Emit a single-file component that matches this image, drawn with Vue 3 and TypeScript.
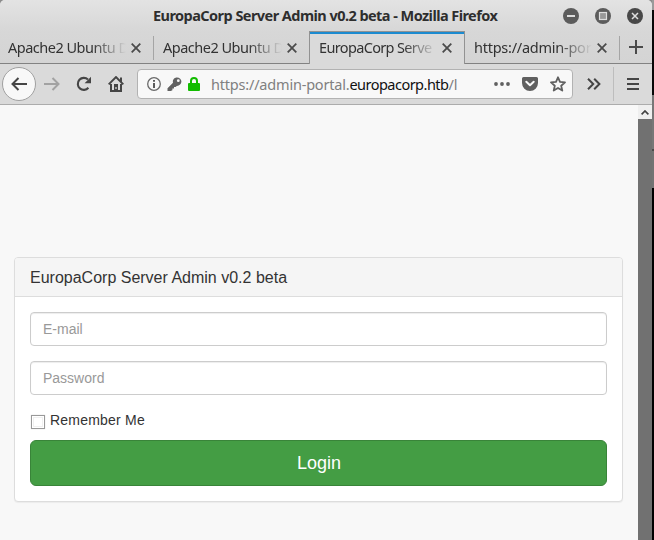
<script setup lang="ts">
import { ref } from 'vue'

interface Tab {
  title: string
  kind: 'plain' | 'active' | 'address'
}

const windowTitle = 'EuropaCorp Server Admin v0.2 beta - Mozilla Firefox'
const tabs: Tab[] = [
  { title: 'Apache2 Ubuntu D', kind: 'plain' },
  { title: 'Apache2 Ubuntu D', kind: 'plain' },
  { title: 'EuropaCorp Serve', kind: 'active' },
  { title: 'https://admin-por', kind: 'address' },
]
const email = ref('')
const password = ref('')
const remember = ref(false)
</script>

<template>
  <div class="desktop">
    <div class="window">
      <header class="titlebar">
        <h1 class="window-title">{{ windowTitle }}</h1>
        <div class="controls">
          <svg width="16" height="16" viewBox="0 0 16 16"><circle cx="8" cy="8" r="8" fill="#5c5c5c" /><path d="M4 8h8" stroke="#dedede" stroke-width="2" /></svg>
          <svg width="16" height="16" viewBox="0 0 16 16"><circle cx="8" cy="8" r="8" fill="#5c5c5c" /><rect x="4.5" y="4.5" width="7" height="7" fill="#999" stroke="#dedede" stroke-width="1.2" /></svg>
          <svg width="16" height="16" viewBox="0 0 16 16"><circle cx="8" cy="8" r="8" fill="#484848" /><path d="M5 5l6 6M11 5l-6 6" stroke="#dedede" stroke-width="1.5" /></svg>
        </div>
      </header>

      <nav class="tabs">
        <div v-for="(tab, i) in tabs" :key="i" class="tab" :class="tab.kind">
          <span class="tab-title">{{ tab.title }}</span>
          <svg class="close" width="10" height="10" viewBox="0 0 10 10"><path d="M.7.7l8.6 8.6M9.3.7L.7 9.3" stroke="#4b4b4b" stroke-width="1.8" /></svg>
        </div>
        <div class="new-tab">
          <svg width="14" height="14" viewBox="0 0 14 14"><path d="M7 0v14M0 7h14" stroke="#4a4a4a" stroke-width="2" /></svg>
        </div>
      </nav>

      <div class="toolbar">
        <div class="back">
          <svg width="16" height="14" viewBox="0 0 16 14"><path d="M16 7H1.5M7.5 1l-6 6 6 6" fill="none" stroke="#454545" stroke-width="2" /></svg>
        </div>
        <svg class="forward" width="16" height="14" viewBox="0 0 16 14"><path d="M0 7h14.5M8.5 1l6 6-6 6" fill="none" stroke="#a2a2a2" stroke-width="2" /></svg>
        <svg class="reload" width="16" height="16" viewBox="0 0 16 16"><path d="M12.4 11.8A6 6 0 1 1 12 3.6" fill="none" stroke="#454545" stroke-width="2.1" /><path d="M15 .8v6.4H8.6z" fill="#454545" /></svg>
        <svg class="home" width="16" height="16" viewBox="0 0 16 16"><path d="M.7 8.4L8 1.1l7.3 7.3" fill="none" stroke="#454545" stroke-width="2" /><path d="M3 8.1V15h10V8.1" fill="none" stroke="#454545" stroke-width="2" /><path d="M6 8h4v7H6zM12 1.5h2V6h-2z" fill="#454545" /><path d="M8 11v2" stroke="#ddd" stroke-width="1.2" /></svg>

        <div class="urlbar">
          <svg class="info" width="14" height="14" viewBox="0 0 14 14"><circle cx="7" cy="7" r="6.3" fill="none" stroke="#696969" stroke-width="1.3" /><path d="M7 6v5M7 3v1.8" stroke="#5b5b5b" stroke-width="2" /></svg>
          <svg class="key" width="15" height="15" viewBox="0 0 15 15"><path d="M14.4 4.5c0 2.4-2.1 4.5-4.6 4.4L8.6 10H7v1.6H5.4v1.6L3.8 14H.5v-2.8L6 5.7C5.4 2.8 7.3.6 10 .6c2.5 0 4.4 1.8 4.4 3.9z" fill="#626262" /><circle cx="11.3" cy="3.7" r="1.4" fill="#f8f8f8" /></svg>
          <svg class="lock" width="12" height="14" viewBox="0 0 12 14"><path d="M3 7V4a3 3 0 0 1 6 0v3" fill="none" stroke="#12bc00" stroke-width="2" /><rect y="6" width="12" height="8" rx="1" fill="#12bc00" /></svg>
          <span class="url">https://admin-portal.<b>europacorp.htb</b>/l</span>
          <svg class="dots" width="16" height="4" viewBox="0 0 16 4"><circle cx="2" cy="2" r="1.9" fill="#606060" /><circle cx="8" cy="2" r="1.9" fill="#606060" /><circle cx="14" cy="2" r="1.9" fill="#606060" /></svg>
          <svg class="pocket" width="16" height="14" viewBox="0 0 16 14"><path d="M1.5 0h13A1.5 1.5 0 0 1 16 1.5V6A8 8 0 0 1 0 6V1.5A1.5 1.5 0 0 1 1.5 0z" fill="#606060" /><path d="M4.3 4.7L8 8.3l3.7-3.6" fill="none" stroke="#f8f8f8" stroke-width="2" stroke-linecap="round" stroke-linejoin="round" /></svg>
          <svg class="star" width="16" height="16" viewBox="0 0 16 16"><path d="M8 1.3l2 4.6 5 .5-3.8 3.3 1.1 4.9L8 12l-4.3 2.6 1.1-4.9L1 6.4l5-.5z" fill="none" stroke="#606060" stroke-width="1.8" stroke-linejoin="round" /></svg>
        </div>

        <svg class="more" width="14" height="12" viewBox="0 0 14 12"><path d="M1 .8L6.2 6 1 11.2M7.2.8L12.4 6l-5.2 5.2" fill="none" stroke="#454545" stroke-width="2" /></svg>
        <div class="menu">
          <svg width="12" height="12" viewBox="0 0 12 12"><path d="M0 1h12M0 6h12M0 11h12" stroke="#454545" stroke-width="2" /></svg>
        </div>
      </div>

      <div class="viewport">
        <main class="page">
          <form class="panel" @submit.prevent>
            <h3 class="panel-heading">EuropaCorp Server Admin v0.2 beta</h3>
            <div class="panel-body">
              <input v-model="email" class="field" type="text" placeholder="E-mail">
              <input v-model="password" class="field" type="password" placeholder="Password">
              <label class="remember"><input v-model="remember" class="check" type="checkbox">Remember Me</label>
              <button class="login" type="submit">Login</button>
            </div>
          </form>
        </main>
        <div class="scrollbar">
          <div class="scroll-up">
            <svg width="8" height="5" viewBox="0 0 8 5"><path d="M.6 4.3L4 1l3.4 3.3" fill="none" stroke="#424242" stroke-width="1.7" /></svg>
          </div>
        </div>
      </div>
    </div>
    <div class="backdrop"></div>
  </div>
</template>

<style>
body {
  overflow: hidden;
}
</style>

<style scoped>
* {
  box-sizing: border-box;
}
svg {
  display: block;
  flex: none;
}
.desktop {
  display: flex;
  width: 654px;
  height: 540px;
  background: #8b8b8b;
  font-family: "Noto Sans", "Open Sans", sans-serif;
}
.window {
  display: flex;
  flex-direction: column;
  width: 652px;
  background: #dadada;
  border-radius: 5px 5px 0 0;
  overflow: hidden;
}
.backdrop {
  width: 2px;
  background: linear-gradient(#9a9a9a 10px, #080808 10px 95px, #777 95px 149px, #4b4b4b 149px 151px, #737373 151px 188px, #000 188px);
}
.titlebar {
  display: grid;
  grid-template-columns: 153px 1fr 90px;
  align-items: center;
  height: 31px;
  background: linear-gradient(#e3e3e3, #d7d7d7);
}
.window-title {
  grid-column: 2;
  margin: 0;
  font-size: 14.5px;
  line-height: 28px;
  padding-bottom: 2px;
  font-weight: 700;
  letter-spacing: -0.55px;
  white-space: nowrap;
  color: #2e2e2e;
}
.controls {
  display: flex;
  gap: 16px;
  margin-left: 1px;
}
.tabs {
  display: flex;
  height: 33px;
  background: linear-gradient(#d7d7d7, #d4d4d4);
  border-bottom: 1px solid #828282;
}
.tab {
  display: flex;
  align-items: center;
  flex: none;
  width: 155px;
  padding: 0 12px 0 9px;
  background: linear-gradient(#a5a5a5, #a5a5a5) right 5px / 1px 24px no-repeat;
}
.tab:first-child {
  width: 154px;
  padding: 0 13px 0 8px;
}
.tab:nth-child(2) {
  background: none;
}
.tab.active {
  width: 156px;
  height: 33px;
  margin-bottom: -1px;
  background: #dadada;
  border: 1px solid #929292;
  border-bottom: 0;
  box-shadow: inset 0 2px #1c8bd0;
}
.tab.address {
  padding-right: 13px;
}
.tab-title {
  flex: 1;
  min-width: 0;
  font-size: 14.5px;
  line-height: 24px;
  letter-spacing: -0.5px;
  white-space: nowrap;
  color: #323232;
  -webkit-mask-image: linear-gradient(to right, #000 calc(100% - 34px), transparent);
  mask-image: linear-gradient(to right, #000 calc(100% - 34px), transparent);
}
.active .tab-title {
  letter-spacing: -0.65px;
  margin-top: -2px;
}
.active .close {
  margin-top: 0;
}
.address .tab-title {
  letter-spacing: -0.25px;
}
.close {
  margin: 2px 0 0 5px;
}
.new-tab {
  display: flex;
  flex: 1;
  align-items: center;
  justify-content: center;
}
.toolbar {
  display: flex;
  align-items: center;
  height: 41px;
  background: #dadada;
  border-bottom: 1px solid #acacac;
}
.back {
  display: flex;
  align-items: center;
  justify-content: center;
  width: 34px;
  height: 34px;
  margin-left: 2px;
  border: 1px solid #a0a0a0;
  border-radius: 50%;
  background: #f8f8f8;
}
.forward {
  margin-left: 8px;
}
.reload {
  margin-left: 16px;
}
.home {
  margin-left: 16px;
}
.urlbar {
  display: flex;
  align-items: center;
  width: 436px;
  height: 30px;
  margin-left: 13px;
  padding-left: 9px;
  border: 1px solid #b2b2b2;
  border-radius: 4px;
  background: #f8f8f8;
}
.key {
  margin-left: 6px;
}
.lock {
  margin-left: 6px;
}
.url {
  width: 271px;
  margin-left: 11px;
  font-size: 14.5px;
  line-height: 26px;
  letter-spacing: -0.2px;
  white-space: nowrap;
  color: #808080;
}
.url b {
  font-weight: 400;
  letter-spacing: -0.52px;
  color: #111;
}
.dots {
  margin-left: 12px;
}
.pocket {
  margin-left: 12px;
}
.star {
  margin-left: 12px;
}
.more {
  margin-left: 14px;
}
.menu {
  display: flex;
  align-items: center;
  height: 34px;
  margin-left: 12px;
  padding-left: 13px;
  border-left: 1px solid #bdbdbd;
}
.viewport {
  display: flex;
  flex: 1;
  background: #f8f8f8;
}
.page {
  flex: 1;
  padding: 152px 15px 0 14px;
  font-family: "Liberation Sans", Arial, sans-serif;
  color: #333;
}
.scrollbar {
  width: 14px;
  background: #717171;
}
.scroll-up {
  display: flex;
  align-items: center;
  justify-content: center;
  height: 14px;
  background: #efefef;
}
.panel {
  height: 245px;
  border: 1px solid #ddd;
  border-radius: 4px;
  background: #fff;
  box-shadow: 0 1px 1px rgba(0, 0, 0, 0.05);
}
.panel-heading {
  height: 39px;
  margin: 0;
  padding: 0 15px;
  border-bottom: 1px solid #ddd;
  border-radius: 3px 3px 0 0;
  background: #f5f5f5;
  font-size: 16px;
  font-weight: 400;
  line-height: 40px;
}
.panel-body {
  display: flex;
  flex-direction: column;
  padding: 15px;
}
.field {
  height: 34px;
  margin: 0 0 15px;
  padding: 6px 12px;
  border: 1px solid #ccc;
  border-radius: 4px;
  background: #fff;
  box-shadow: inset 0 1px 1px rgba(0, 0, 0, 0.075);
  font: 14px "Liberation Sans", Arial, sans-serif;
  outline: none;
}
.field::placeholder {
  color: #999;
}
.remember {
  display: flex;
  height: 20px;
  margin-bottom: 10px;
  font-size: 14px;
  line-height: 20px;
  letter-spacing: 0.22px;
}
.check {
  appearance: none;
  width: 14px;
  height: 14px;
  margin: 5px 5px 0 1px;
  border: 1px solid #999;
  background: #fff;
  box-shadow: inset 0 0 0 1px #fff, inset 0 0 0 2px #f0f0f0, 0 0 1px #ccc;
}
.login {
  height: 46px;
  padding: 0 0 0 1px;
  border: 1px solid #398439;
  border-radius: 6px;
  background: #449d44;
  color: #fff;
  font: 18px "Liberation Sans", Arial, sans-serif;
}
</style>
